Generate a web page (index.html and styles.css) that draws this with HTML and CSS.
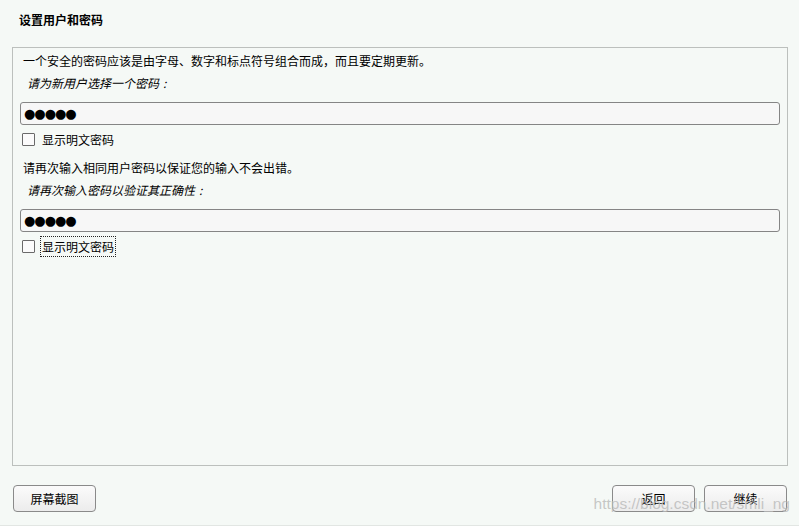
FILE: index.html
```html
<!DOCTYPE html>
<html lang="zh-CN">
<head>
<meta charset="utf-8">
<link rel="stylesheet" href="styles.css">
</head>
<body>
<div class="window">
  <h1 class="title">设置用户和密码</h1>
  <div class="panel">
    <p class="desc first">一个安全的密码应该是由字母、数字和标点符号组合而成，而且要定期更新。</p>
    <p class="prompt">请为新用户选择一个密码<span class="colon">:</span></p>
    <div class="field">●●●●●</div>
    <label class="check"><span class="box"></span><span class="lbl">显示明文密码</span></label>
    <p class="desc second">请再次输入相同用户密码以保证您的输入不会出错。</p>
    <p class="prompt">请再次输入密码以验证其正确性<span class="colon">:</span></p>
    <div class="field">●●●●●</div>
    <label class="check"><span class="box"></span><span class="lbl focus">显示明文密码</span></label>
  </div>
  <div class="footer">
    <button class="btn">屏幕截图</button>
    <div class="right">
      <button class="btn">返回</button>
      <button class="btn">继续</button>
    </div>
    <span class="watermark">https://blog.csdn.net/smli_ng</span>
  </div>
</div>
</body>
</html>
```
FILE: styles.css
```css
html, body {
  margin: 0;
  padding: 0;
}
body {
  background: #f5f9f6;
  font-family: "Noto Sans CJK SC", "Noto Sans", "DejaVu Sans", sans-serif;
  font-size: 12px;
  color: #000;
}
.window {
  width: 799px;
  height: 526px;
  box-sizing: border-box;
  border-bottom: 1px solid #e2e6e3;
  display: flex;
  flex-direction: column;
}
.title {
  margin: 0;
  padding: 11px 0 0 19px;
  height: 36px;
  box-sizing: border-box;
  font-size: 12px;
  font-weight: bold;
  line-height: 18px;
}
.panel {
  margin: 11px 0 0 12px;
  width: 776px;
  height: 419px;
  box-sizing: border-box;
  border: 1px solid #bcc0bd;
  padding: 4px 7px 0 7px;
  display: flex;
  flex-direction: column;
}
.desc {
  margin: 0;
  padding-left: 3px;
  line-height: 18px;
}
.desc.second {
  margin-top: 8px;
}
.prompt {
  margin: 4px 0 0 0;
  padding-left: 7px;
  line-height: 18px;
  font-style: italic;
}
.colon {
  display: inline-block;
  padding: 0 5px 0 4px;
}
.field {
  margin-top: 10px;
  height: 23px;
  box-sizing: border-box;
  border: 1px solid #858585;
  border-radius: 3px;
  background: #f7f7f7;
  padding: 0 0 0 3px;
  font-family: "DejaVu Sans", sans-serif;
  font-size: 13px;
  line-height: 21px;
  letter-spacing: -1px;
}
.check {
  margin-top: 2px;
  height: 24px;
  display: flex;
  align-items: center;
  padding-left: 2px;
}
.box {
  width: 11px;
  height: 11px;
  border: 1px solid #6a6a6a;
  background: #fbfbfb;
  border-radius: 1px;
  margin-right: 5px;
}
.lbl {
  padding: 1px 1px;
  line-height: 17px;
  border: 1px dotted transparent;
}
.lbl.focus {
  border-color: #222;
}
.footer {
  position: relative;
  margin-top: 19px;
  padding: 0 12px 0 13px;
  display: flex;
  justify-content: space-between;
}
.right {
  display: flex;
  gap: 9px;
}
.btn {
  width: 83px;
  height: 27px;
  border: 1px solid #8a8a8a;
  border-radius: 4px;
  background: linear-gradient(#fbfbfb, #ececec);
  font-family: "Noto Sans CJK SC", "Noto Sans", sans-serif;
  font-size: 12px;
  color: #000;
  padding: 0;
}
.watermark {
  position: absolute;
  right: 9px;
  top: 10px;
  font-family: "Liberation Sans", Arial, sans-serif;
  font-size: 15.5px;
  color: rgba(185, 185, 185, 0.8);
  pointer-events: none;
}
```
